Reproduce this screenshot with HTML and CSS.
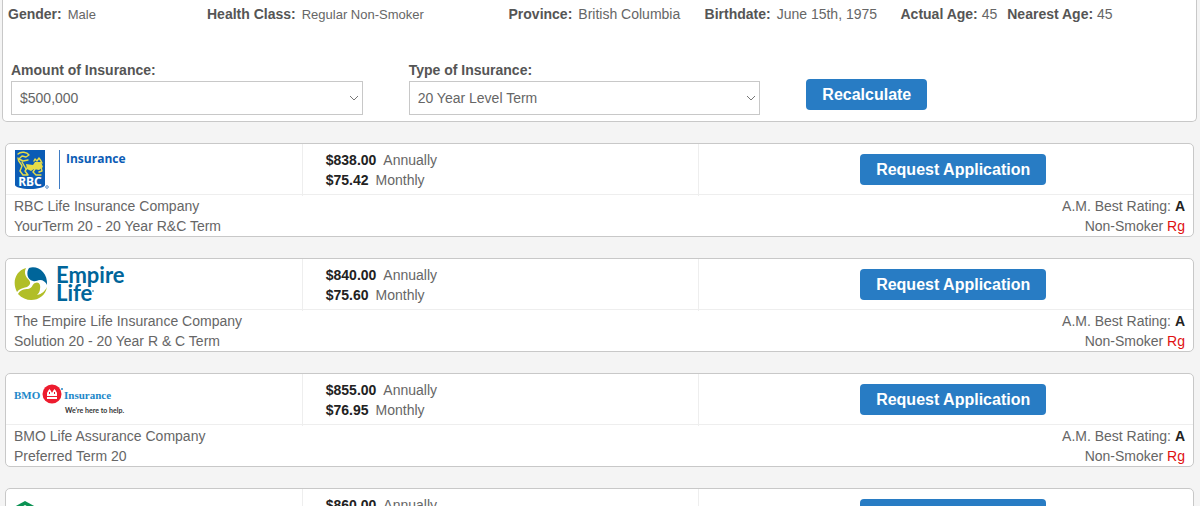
FILE: index.html
```html
<!DOCTYPE html>
<html lang="en">
<head>
    <meta charset="UTF-8">
    <meta name="viewport" content="width=device-width, initial-scale=1.0">
    <title>Term Life Insurance Quotes</title>
    <link rel="stylesheet" href="styles.css">
</head>
<body>
    <form class="panel">
        <div class="profile">
            <div><b>Gender:</b><span class="small">Male</span></div>
            <div><b>Health Class:</b><span class="small">Regular Non-Smoker</span></div>
            <div><b>Province:</b><span>British Columbia</span></div>
            <div><b>Birthdate:</b><span>June 15th, 1975</span></div>
            <div class="ages">
                <div><b>Actual Age:</b> 45</div>
                <div><b>Nearest Age:</b> 45</div>
            </div>
        </div>
        <div class="filters">
            <div class="field">
                <label for="amount">Amount of Insurance:</label>
                <div class="select-wrap">
                    <select id="amount">
                        <option>$500,000</option>
                    </select>
                    <svg class="chevron" width="10" height="6" viewBox="0 0 10 6"><path d="M1 1l4 4 4-4"/></svg>
                </div>
            </div>
            <div class="field">
                <label for="type">Type of Insurance:</label>
                <div class="select-wrap">
                    <select id="type">
                        <option>20 Year Level Term</option>
                    </select>
                    <svg class="chevron" width="10" height="6" viewBox="0 0 10 6"><path d="M1 1l4 4 4-4"/></svg>
                </div>
            </div>
            <div class="field action">
                <button type="button" class="btn">Recalculate</button>
            </div>
        </div>
    </form>

    <main class="quotes">
        <section class="card">
            <div class="top">
                <div class="logo">
                    <svg width="120" height="42" viewBox="0 0 120 42" role="img" aria-label="RBC Insurance">
                        <path fill="#0b5cb5" d="M1 1h30v35c0 2-7 4-15 4S1 38 1 36z"/>
                        <g fill="none" stroke="#e6dc48" stroke-width="1.4" stroke-linecap="round" stroke-linejoin="round">
                            <path d="M4 5c3-3 9-2 11 1l-3 2-4-1-3 3 4 2 5-1"/>
                            <path d="M4 9c0 4 3 5 4 8l-2 5 3 4h5l-3-4 3-4"/>
                            <path d="M8 13l4 7M21 20l-2 3 3 3h5M27 18l1 4-3 1"/>
                            <path d="M20 12l1-2 2 2 2-3 2 3 1 2"/>
                        </g>
                        <path fill="#e6dc48" d="M12 15l7 1 2-3h6l2 5-4 3-5-1-3 2-4-2z"/>
                        <text class="rbc-badge" x="16" y="37" text-anchor="middle">RBC</text>
                        <circle cx="33" cy="38" r="1.3" fill="none" stroke="#5b8fca" stroke-width="1"/>
                        <path stroke="#3f7cc4" d="M45.500 1v39"/>
                        <text class="rbc-name" x="52" y="14">Insurance</text>
                    </svg>
                </div>
                <div class="price">
                    <div><b>$838.00</b>Annually</div>
                    <div><b>$75.42</b>Monthly</div>
                </div>
                <div class="apply"><button type="button" class="btn">Request Application</button></div>
            </div>
            <div class="bottom">
                <div>RBC Life Insurance Company<br>YourTerm 20 - 20 Year R&amp;C Term</div>
                <div class="rating">A.M. Best Rating: <b>A</b><br>Non-Smoker <span class="red">Rg</span></div>
            </div>
        </section>

        <section class="card">
            <div class="top">
                <div class="logo">
                    <svg width="120" height="42" viewBox="0 0 120 42" role="img" aria-label="Empire Life">
                        <path fill="#b1be27" d="M12 4C1 7-2 19 3 28c2-3 6-4 10-5 4-2 4-5 1-8-3-3-4-7-2-11z"/>
                        <path fill="#00659a" d="M15 4c9-3 19 5 18 17-1-3-4-5-7-5-3 0-4 2-7 1-6-1-7-9-4-13z"/>
                        <path fill="#b1be27" d="M33 23c-2 13-19 18-29 7 2-4 6-5 10-5 5-1 4-5 7-6 4-2 6 2 5 6 0 3-2 5-3 6 5-1 8-4 10-8z"/>
                        <text class="empire" x="42" y="19">Empire</text>
                        <text class="empire" x="42" y="37">Life</text>
                        <circle cx="79" cy="27" r="1" fill="#6da5c2"/>
                    </svg>
                </div>
                <div class="price">
                    <div><b>$840.00</b>Annually</div>
                    <div><b>$75.60</b>Monthly</div>
                </div>
                <div class="apply"><button type="button" class="btn">Request Application</button></div>
            </div>
            <div class="bottom">
                <div>The Empire Life Insurance Company<br>Solution 20 - 20 Year R &amp; C Term</div>
                <div class="rating">A.M. Best Rating: <b>A</b><br>Non-Smoker <span class="red">Rg</span></div>
            </div>
        </section>

        <section class="card">
            <div class="top">
                <div class="logo">
                    <svg width="120" height="42" viewBox="0 0 120 42" role="img" aria-label="BMO Insurance">
                        <text class="bmo" x="0" y="20">BMO</text>
                        <circle cx="38" cy="15" r="9.500" fill="#ed1c2e"/>
                        <path fill="#fff" d="M33 20v-6c0-1 1-1 1-2l1.500-2 1.500 2c0 1 1 1 1 2 0-1 1-1 1-2l1.500-2 1.500 2c0 1 1 1 1 2v6z"/>
                        <path stroke="#ed1c2e" d="M33 17.500h10M35.500 13v2M40.500 13v2"/>
                        <circle cx="48" cy="10" r="1" fill="#2187c9"/>
                        <text class="bmo" x="50" y="20">Insurance</text>
                        <text class="bmo-tag" x="51" y="34">We’re here to help.</text>
                    </svg>
                </div>
                <div class="price">
                    <div><b>$855.00</b>Annually</div>
                    <div><b>$76.95</b>Monthly</div>
                </div>
                <div class="apply"><button type="button" class="btn">Request Application</button></div>
            </div>
            <div class="bottom">
                <div>BMO Life Assurance Company<br>Preferred Term 20</div>
                <div class="rating">A.M. Best Rating: <b>A</b><br>Non-Smoker <span class="red">Rg</span></div>
            </div>
        </section>

        <section class="card">
            <div class="top">
                <div class="logo">
                    <svg width="120" height="42" viewBox="0 0 120 42" aria-hidden="true">
                        <path fill="#0a9252" d="M11 7l11 6v12l-11 6-11-6V13z"/>
                        <path fill="#fff" d="M11 11l5 3-5 3-5-3z"/>
                    </svg>
                </div>
                <div class="price">
                    <div><b>$860.00</b>Annually</div>
                </div>
                <div class="apply"><button type="button" class="btn">Request Application</button></div>
            </div>
        </section>
    </main>
</body>
</html>
```

FILE: styles.css
```css
* {
    box-sizing: border-box;
}

body {
    font-family: "Liberation Sans", Arial, sans-serif;
    font-size: 14px;
    line-height: 20px;
    color: #666;
    margin: 0;
    height: 100vh;
    overflow: hidden;
    background-color: #f4f4f4;
}

.panel {
    margin: 0 3px 0 2px;
    padding: 4px 0 6px;
    background: white;
    border: 1px solid #c8c8c8;
    border-top: none;
    border-radius: 0 0 5px 5px;
}

.profile {
    display: grid;
    grid-template-columns: 66fr 100fr 65fr 65fr 98fr;
    padding-left: 5px;
    white-space: nowrap;
}

.profile b, .field label {
    color: #555;
    font-weight: bold;
}

.profile span {
    margin-left: 6px;
}

.profile .small {
    font-size: 13px;
}

.ages {
    display: flex;
    gap: 10px;
}

.filters {
    display: grid;
    grid-template-columns: repeat(3, 1fr);
    margin-top: 35px;
}

.field {
    padding: 0 38px 0 8px;
}

.field label {
    display: block;
}

.action {
    padding-top: 19px;
}

.select-wrap {
    position: relative;
    margin-top: 1px;
}

select {
    display: block;
    width: 100%;
    height: 34px;
    padding: 0 8px;
    font: inherit;
    color: #666;
    background: white;
    border: 1px solid #c8c8c8;
    border-radius: 0;
    appearance: none;
}

.chevron {
    position: absolute;
    right: 4px;
    top: 14px;
    fill: none;
    stroke: #777;
    pointer-events: none;
}

.btn {
    display: block;
    height: 31px;
    padding: 0 16px;
    font-family: inherit;
    font-size: 16px;
    font-weight: bold;
    color: white;
    background-color: #287cc4;
    border: none;
    border-radius: 4px;
    cursor: pointer;
}

.quotes {
    display: flex;
    flex-direction: column;
    gap: 21px;
    padding: 21px 6px 0 5px;
}

.card {
    background: white;
    border: 1px solid #c8c8c8;
    border-radius: 5px;
}

.top {
    display: grid;
    grid-template-columns: 3fr 4fr 5fr;
    height: 51px;
    border-bottom: 1px solid #eee;
}

.logo {
    padding: 5px 8px;
    border-right: 1px solid #eee;
}

.logo svg {
    display: block;
}

.price {
    padding: 6px 23px;
}

.price b {
    margin-right: 7px;
    color: #222;
}

.apply {
    display: flex;
    justify-content: center;
    padding: 10px 0 0 14px;
    border-left: 1px solid #eee;
}

.bottom {
    display: flex;
    justify-content: space-between;
    height: 41px;
    padding: 1px 8px 0;
}

.rating {
    text-align: right;
}

.rating b {
    color: #222;
}

.red {
    color: #e01010;
}

/* Company logos */
.rbc-badge {
    font: bold 12px "Noto Sans", sans-serif;
    fill: white;
}

.rbc-name {
    font: bold 12px "Open Sans", sans-serif;
    fill: #0b5cb5;
}

.empire {
    font: bold 22px/1 Lato, sans-serif;
    fill: #00659a;
}

.bmo {
    font: bold 11px "Liberation Serif", serif;
    fill: #2187c9;
}

.bmo-tag {
    font: bold 7px Lato, sans-serif;
    fill: #333;
}
```
